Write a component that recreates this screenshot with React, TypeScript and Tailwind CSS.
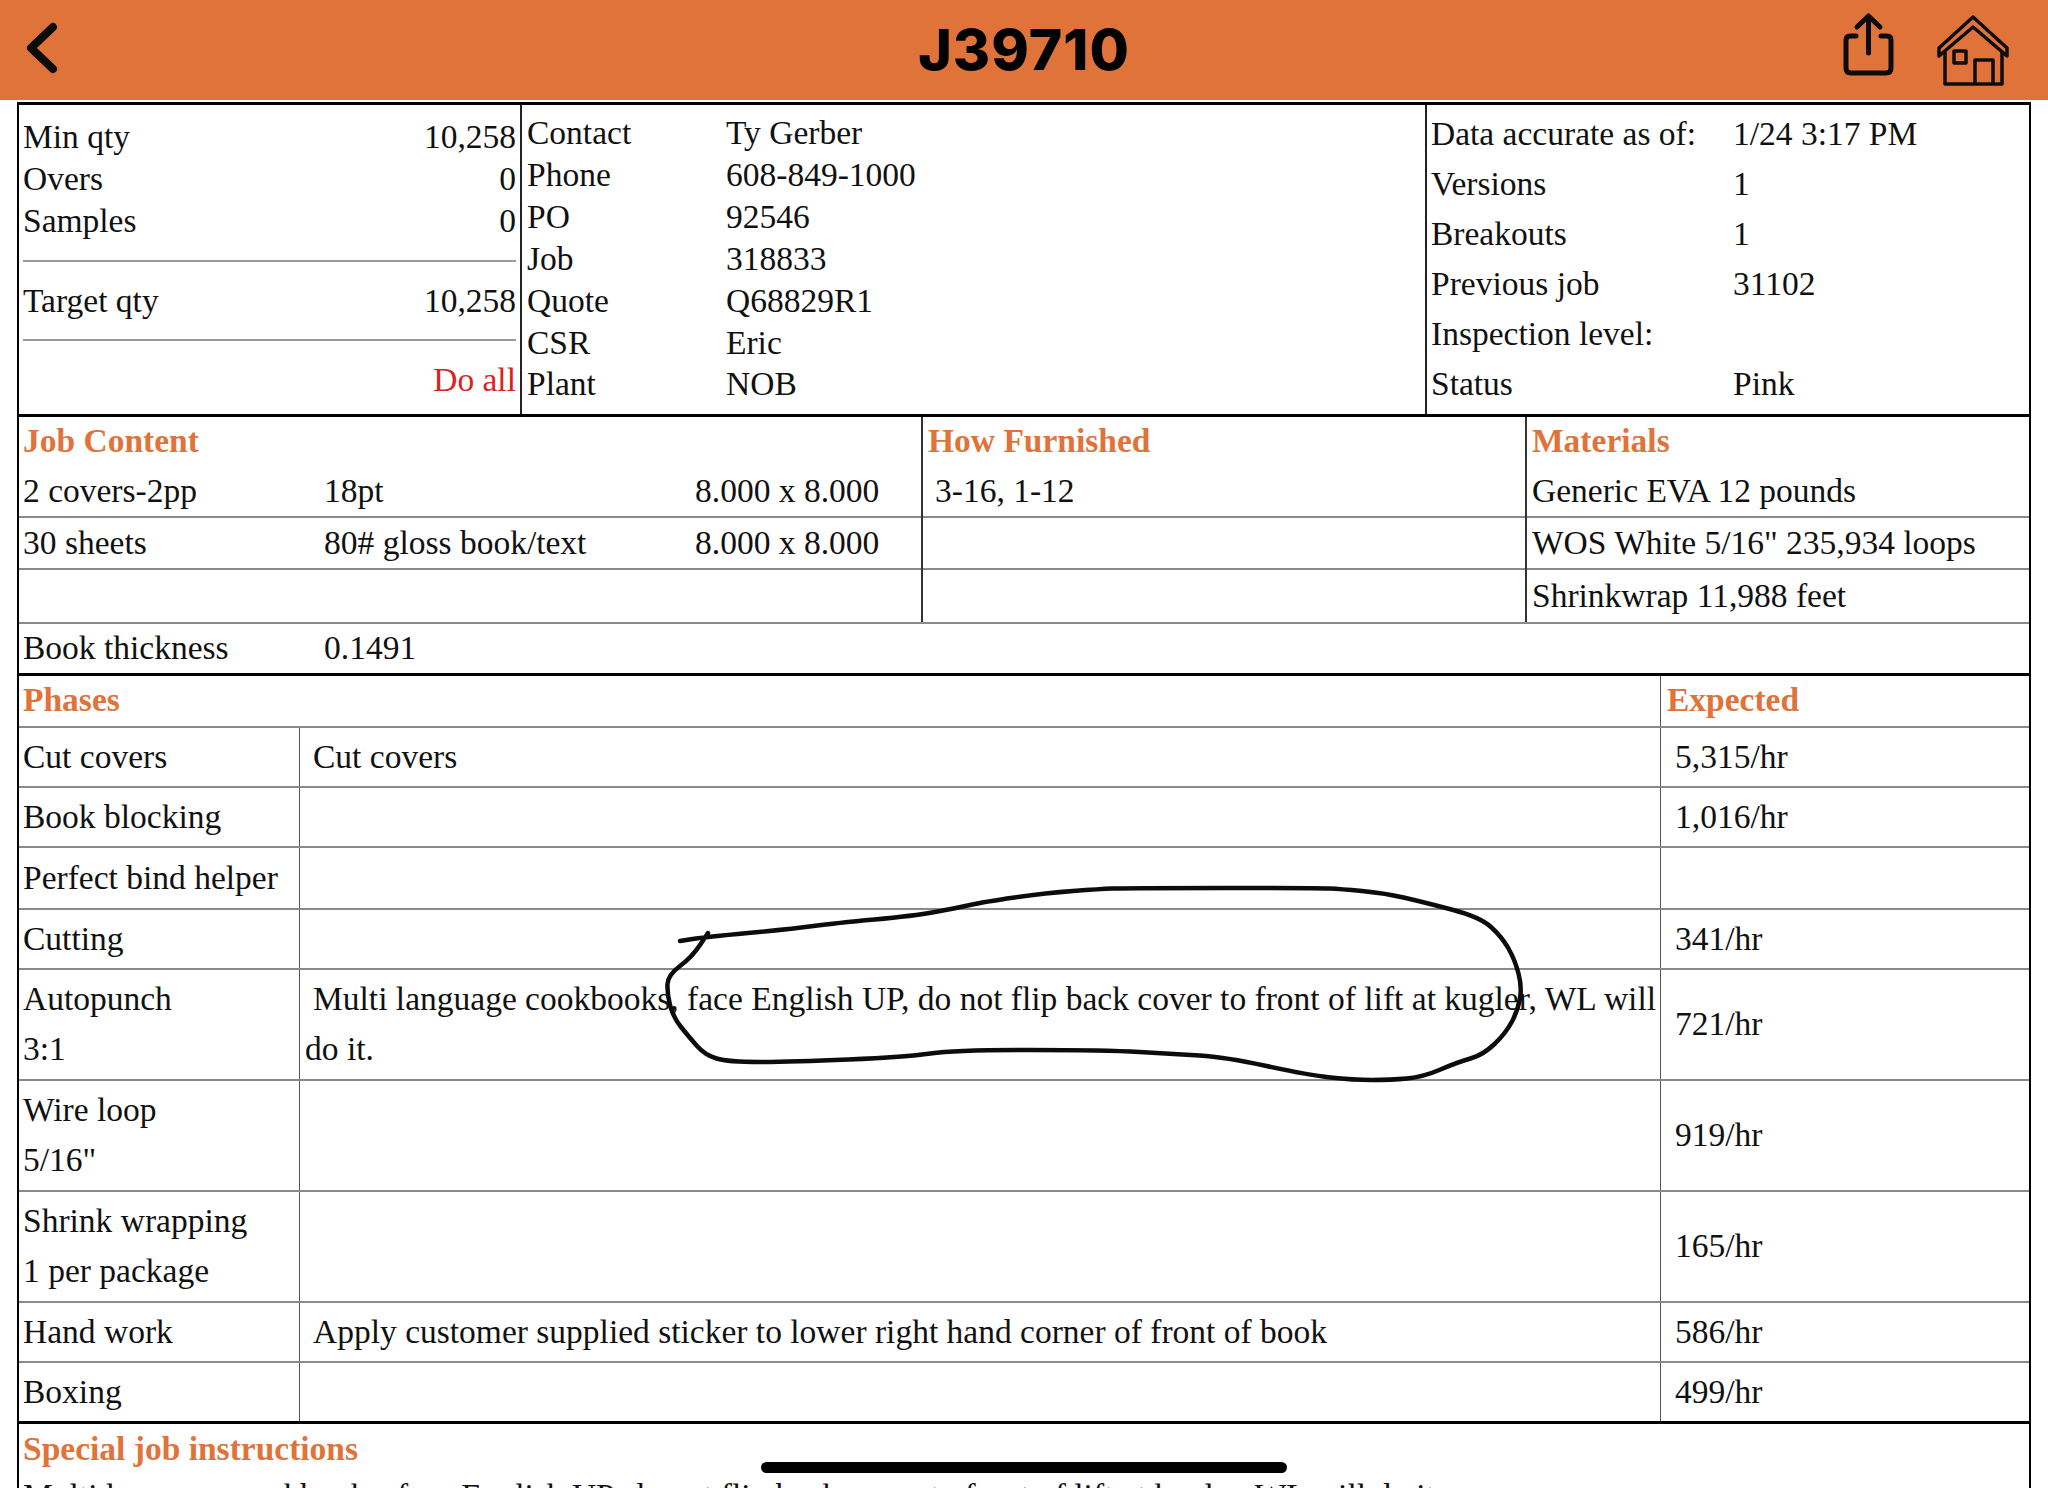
import React from "react";

const pts: [number, number][] = [[680,941],[705,937],[791,929],[836,923],[913,916],[957,908],[983,902],[1046,893],[1100,889],[1125,888],[1320,888],[1340,889],[1384,893],[1423,902],[1480,917],[1502,937],[1515,960],[1522,987],[1518,1010],[1506,1033],[1483,1055],[1458,1062],[1423,1077],[1391,1080],[1353,1080],[1308,1075],[1225,1057],[1174,1054],[1105,1050],[955,1050],[906,1057],[791,1062],[728,1062],[705,1055],[689,1037],[673,1017],[667,993],[668,975],[692,957],[708,933]];
function smooth(p: [number, number][]) {
  let d = `M${p[0][0]} ${p[0][1]} L${(p[0][0] + p[1][0]) / 2} ${(p[0][1] + p[1][1]) / 2}`;
  for (let i = 1; i < p.length - 1; i++) {
    d += ` Q${p[i][0]} ${p[i][1]} ${(p[i][0] + p[i + 1][0]) / 2} ${(p[i][1] + p[i + 1][1]) / 2}`;
  }
  d += ` L${p[p.length - 1][0]} ${p[p.length - 1][1]}`;
  return d;
}

function KV({ k, v, h }: { k: string; v?: string; h: string }) {
  return (
    <div className={`flex items-center ${h}`}>
      <span className="w-[199px] shrink-0">{k}</span>
      <span>{v}</span>
    </div>
  );
}

function Qty({ k, v, cls }: { k?: string; v: string; cls?: string }) {
  return (
    <div className={`flex h-[42px] items-center justify-between pl-[4px] pr-[4px] ${cls ?? ""}`}>
      <span>{k}</span>
      <span>{v}</span>
    </div>
  );
}

function Phase({ name, sub, note, rate, h, last }: { name: string; sub?: string; note?: React.ReactNode; rate?: string; h: string; last?: boolean }) {
  return (
    <div className={`flex ${h} ${last ? "border-b-[3px] border-black" : "border-b-2 border-[#8a8a8a]"}`}>
      <div className="flex w-[281px] shrink-0 flex-col justify-center border-r border-[#555] pb-[1px] pl-[4px] leading-[50px]">
        <div>{name}</div>
        {sub && <div>{sub}</div>}
      </div>
      <div className="flex flex-1 flex-col justify-center border-r border-[#555] pb-[1px] pl-[5px] leading-[50px]">{note}</div>
      <div className="flex w-[368px] shrink-0 items-center pb-[1px] pl-[14px]">{rate}</div>
    </div>
  );
}

export default function App() {
  return (
    <div className="relative h-[1488px] w-[2048px] overflow-hidden bg-white text-[33.5px] leading-[42px] text-[#111] [font-family:'Liberation_Serif',serif]">
      <header className="flex h-[100px] items-start bg-[#e0733a] text-black">
        <div className="flex-1">
          <svg className="ml-[24px] mt-[22px] h-[52px] w-[36px]" viewBox="0 0 36 52" fill="none" stroke="#0c0c0c" strokeWidth="8" strokeLinecap="round" strokeLinejoin="round">
            <path d="M29 5 L7 26 L29 47" />
          </svg>
        </div>
        <h1 className="mt-[14px] text-[57px] font-extrabold leading-[72px] tracking-[1px] [font-family:Inter,sans-serif]">J39710</h1>
        <div className="flex flex-1 items-start justify-end">
          <svg className="mt-[12px] h-[66px] w-[56px]" viewBox="0 0 56 66" fill="none" stroke="#0c0c0c" strokeWidth="5" strokeLinecap="round" strokeLinejoin="round">
            <path d="M16 24 H10 Q6 24 6 28 V56 Q6 61 11 61 H46 Q51 61 51 56 V28 Q51 24 47 24 H41" />
            <path d="M28.5 41 V5 M17 15 L28.5 4 L40 15" />
          </svg>
          <svg className="ml-[40px] mr-[38px] mt-[12px] h-[76px] w-[74px]" viewBox="0 0 74 76" fill="none" stroke="#0c0c0c" strokeWidth="3.5" strokeLinejoin="round">
            <path d="M3 36 L37 5 L71 36 V44 L37 15 L3 44 Z" />
            <path d="M9 40 V72 H66 V40" />
            <path d="M39 72 V48 H57 V72" />
            <rect x="18" y="39" width="12" height="12" />
          </svg>
        </div>
      </header>

      <main className="ml-[17px] mt-[2px] w-[2014px] border-x-2 border-black">
        <section className="flex h-[315px] border-y-[3px] border-black">
          <div className="w-[503px] shrink-0 border-r-2 border-[#222] pt-[11px]">
            <Qty k="Min qty" v="10,258" />
            <Qty k="Overs" v="0" />
            <Qty k="Samples" v="0" />
            <div className="mx-[4px] mt-[18px] border-t-2 border-[#999]" />
            <Qty k="Target qty" v="10,258" cls="mt-[18px]" />
            <div className="mx-[4px] mt-[17px] border-t-2 border-[#999]" />
            <Qty v="Do all" cls="mt-[18px] text-[#d8231f]" />
          </div>
          <div className="w-[905px] shrink-0 border-r-2 border-[#222] pl-[5px] pt-[7px]">
            <KV k="Contact" v="Ty Gerber" h="h-[42px]" />
            <KV k="Phone" v="608-849-1000" h="h-[42px]" />
            <KV k="PO" v="92546" h="h-[42px]" />
            <KV k="Job" v="318833" h="h-[42px]" />
            <KV k="Quote" v="Q68829R1" h="h-[42px]" />
            <KV k="CSR" v="Eric" h="h-[41px]" />
            <KV k="Plant" v="NOB" h="h-[42px]" />
          </div>
          <div className="flex-1 pl-[4px] pt-[4px]">
            {[["Data accurate as of:", "1/24 3:17 PM"], ["Versions", "1"], ["Breakouts", "1"], ["Previous job", "31102"], ["Inspection level:", ""], ["Status", "Pink"]].map(([k, v]) => (
              <div key={k} className="flex h-[50px] items-center">
                <span className="w-[302px] shrink-0">{k}</span>
                <span>{v}</span>
              </div>
            ))}
          </div>
        </section>

        <section className="flex h-[205px]">
          <div className="w-[904px] shrink-0 border-r-2 border-[#333]">
            <div className="flex h-[49px] items-center pb-[2px] pl-[4px] font-bold text-[#e0733a]">Job Content</div>
            {[["2 covers-2pp", "18pt", "8.000 x 8.000"], ["30 sheets", "80# gloss book/text", "8.000 x 8.000"], ["", "", ""]].map((r, i) => (
              <div key={i} className={`flex h-[52px] items-center pl-[4px] ${i < 2 ? "border-b-2 border-[#8a8a8a]" : ""}`}>
                <span className="w-[301px] shrink-0">{r[0]}</span>
                <span className="w-[371px] shrink-0">{r[1]}</span>
                <span>{r[2]}</span>
              </div>
            ))}
          </div>
          <div className="w-[604px] shrink-0 border-r-2 border-[#333]">
            <div className="flex h-[49px] items-center pb-[2px] pl-[5px] font-bold text-[#e0733a]">How Furnished</div>
            <div className="flex h-[52px] items-center border-b-2 border-[#8a8a8a] pl-[12px]">3-16, 1-12</div>
            <div className="h-[52px] border-b-2 border-[#8a8a8a]" />
          </div>
          <div className="flex-1 pl-[5px]">
            <div className="flex h-[49px] items-center pb-[2px] font-bold text-[#e0733a]">Materials</div>
            <div className="-ml-[5px] flex h-[52px] items-center border-b-2 border-[#8a8a8a] pl-[5px]">Generic EVA 12 pounds</div>
            <div className="-ml-[5px] flex h-[52px] items-center border-b-2 border-[#8a8a8a] pl-[5px]">WOS White 5/16" 235,934 loops</div>
            <div className="flex h-[51px] items-center">Shrinkwrap 11,988 feet</div>
          </div>
        </section>

        <section className="flex h-[54px] items-center border-y-2 border-b-[3px] border-t-[#8a8a8a] border-b-black pb-[2px] pl-[4px]">
          <span className="w-[301px] shrink-0">Book thickness</span>
          <span>0.1491</span>
        </section>

        <section>
          <div className="flex h-[52px] items-stretch border-b-2 border-[#8a8a8a] font-bold text-[#e0733a]">
            <span className="flex w-[1642px] shrink-0 items-center border-r border-[#555] pb-[3px] pl-[4px]">Phases</span>
            <span className="flex items-center pb-[3px] pl-[6px]">Expected</span>
          </div>
          <Phase h="h-[60px]" name="Cut covers" note={<div className="pl-[8px]">Cut covers</div>} rate="5,315/hr" />
          <Phase h="h-[60px]" name="Book blocking" rate="1,016/hr" />
          <Phase h="h-[62px]" name="Perfect bind helper" />
          <Phase h="h-[60px]" name="Cutting" rate="341/hr" />
          <Phase h="h-[111px]" name="Autopunch" sub="3:1" note={<div className="indent-[8px]">Multi language cookbooks, face English UP, do not flip back cover to front of lift at kugler, WL will do it.</div>} rate="721/hr" />
          <Phase h="h-[111px]" name="Wire loop" sub={'5/16"'} rate="919/hr" />
          <Phase h="h-[111px]" name="Shrink wrapping" sub="1 per package" rate="165/hr" />
          <Phase h="h-[60px]" name="Hand work" note={<div className="pl-[8px]">Apply customer supplied sticker to lower right hand corner of front of book</div>} rate="586/hr" />
          <Phase h="h-[61px]" name="Boxing" rate="499/hr" last />
        </section>

        <section className="pl-[4px]">
          <div className="flex h-[51px] items-center pb-[2px] font-bold text-[#e0733a]">Special job instructions</div>
          <div className="whitespace-nowrap">Multi language cookbooks, face English UP, do not flip back cover to front of lift at kugler, WL will do it.</div>
        </section>
      </main>

      <svg className="absolute left-0 top-0 h-[1488px] w-[2048px]" viewBox="0 0 2048 1488" fill="none" stroke="#0c0c0c" strokeWidth="4.5" strokeLinecap="round" strokeLinejoin="round">
        <path d={smooth(pts)} />
      </svg>
      <div className="absolute left-[761px] top-[1462px] h-[11px] w-[526px] rounded-full bg-black" />
    </div>
  );
}
